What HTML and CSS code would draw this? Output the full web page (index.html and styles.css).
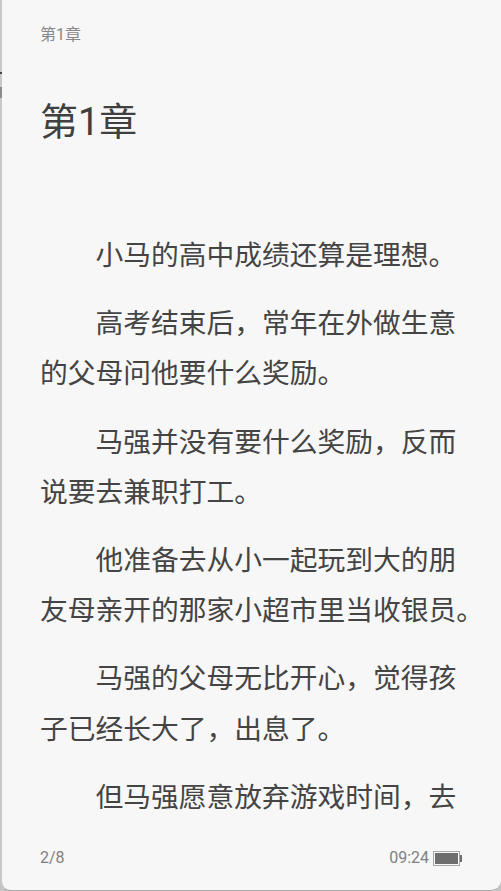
FILE: index.html
```html
<!DOCTYPE html>
<html lang="zh-CN">
<head>
<meta charset="utf-8">
<title>第1章</title>
<link rel="stylesheet" href="styles.css">
</head>
<body>
<main class="page">
  <span class="edge-mark edge-mark-a"></span>
  <span class="edge-mark edge-mark-b"></span>
  <header class="running-head">第1章</header>
  <h1 class="chapter-title">第1章</h1>
  <article class="content">
    <p>小马的高中成绩还算是理想。</p>
    <p>高考结束后，常年在外做生意<br>的父母问他要什么奖励。</p>
    <p>马强并没有要什么奖励，反而<br>说要去兼职打工。</p>
    <p>他准备去从小一起玩到大的朋<br>友母亲开的那家小超市里当收银员。</p>
    <p>马强的父母无比开心，觉得孩<br>子已经长大了，出息了。</p>
    <p>但马强愿意放弃游戏时间，去</p>
  </article>
  <footer class="status">
    <span>2/8</span>
    <span class="status-right">
      <span>09:24</span>
      <svg class="battery" width="29" height="15" viewBox="0 0 29 15" aria-hidden="true">
        <rect x="0.5" y="0.5" width="26" height="14" fill="none" stroke="#a8a8a8"/>
        <rect x="2" y="2" width="23" height="11" fill="#6e6e6e"/>
        <rect x="27" y="4" width="2" height="7" fill="#6e6e6e"/>
      </svg>
    </span>
  </footer>
</main>
</body>
</html>
```
FILE: styles.css
```css
html, body {
  margin: 0;
  height: 100%;
  background: #c4c4c4;
}
body {
  font-family: "Roboto", "Noto Sans CJK SC", sans-serif;
  overflow: hidden;
}
.page {
  position: relative;
  box-sizing: border-box;
  width: 501px;
  height: 891px;
  padding-left: 38px;
  background: #f7f7f7;
  border-left: 2px solid #c8c8c8;
  border-bottom: 1px solid #a9a9a9;
  border-radius: 0 0 10px 10px;
  display: flex;
  flex-direction: column;
}
.edge-mark {
  position: absolute;
  left: -2px;
  width: 2px;
  background: #444444;
}
.edge-mark-a {
  top: 72px;
  height: 2px;
}
.edge-mark-b {
  top: 87px;
  height: 11px;
  background: #8c8c8c;
}
.running-head {
  margin-top: 24px;
  font-size: 16px;
  line-height: 21px;
  color: #888888;
}
.chapter-title {
  margin: 43px 0 0;
  font-size: 38px;
  line-height: 68px;
  font-weight: 400;
  color: #404040;
}
.content {
  margin-top: 75px;
  font-size: 27.75px;
  line-height: 50.2px;
  font-weight: 400;
  color: #444444;
  white-space: nowrap;
  flex: 1;
  overflow: hidden;
}
.content p {
  margin: 0 0 18px;
  text-indent: 55.5px;
}
.status {
  display: flex;
  justify-content: space-between;
  align-items: center;
  padding-right: 39px;
  margin-bottom: 22px;
  font-size: 16px;
  line-height: 20px;
  color: #808080;
}
.status-right {
  display: flex;
  align-items: center;
  gap: 4px;
}
```
